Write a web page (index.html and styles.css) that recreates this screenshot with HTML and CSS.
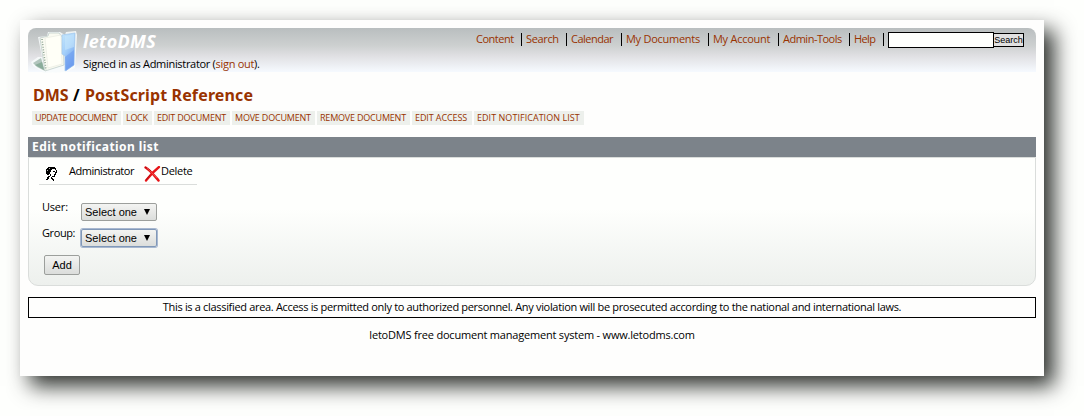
FILE: index.html
```html
<!DOCTYPE html>
<html lang="en">
<head>
<meta charset="utf-8">
<title>letoDMS: Edit notification list</title>
<link rel="stylesheet" href="styles.css">
</head>
<body>
<div class="page">
  <header class="header">
    <svg class="logo" width="48" height="43" viewBox="0 0 48 43">
      <path d="M0 32 7 27 11 27 7 7 16 6 17 2 29 2 34 5 35 2 45 1 46 5 44 38 35 42 13 43 2 36Z" fill="#f8fcfc" opacity=".85"/>
      <path d="M2 33 10 28 14 41 6 37Z" fill="#b2c5bd"/>
      <path d="M4 35 11 32 13 40Z" fill="#8aac9a"/>
      <path d="M9 8 17 6 18 3 28 3 32 8 33 35 14 41Z" fill="#fafbf2" stroke="#c2cfcc" stroke-width=".8"/>
      <path d="M14 8 30 5 31 34 17 38Z" fill="#fffff7" stroke="#e0e4da" stroke-width=".5"/>
      <path d="M11 9 15 40" stroke="#8ca292" stroke-width="1.5" stroke-dasharray="1 1.6"/>
      <path d="M31 5 44 3 43 35 34 41 34 26 31 24Z" fill="url(#folder)" stroke="#a3c9ec" stroke-width=".7"/>
      <path d="M34 27 43 20 43 35 35 41Z" fill="#6d9df0" opacity=".6"/>
      <path d="M34 6V20L43 17V4" fill="#cbe9fb" opacity=".5"/>
      <defs><linearGradient id="folder" x1="0" y1="0" x2=".5" y2="1"><stop stop-color="#c3e5fb"/><stop offset=".5" stop-color="#a3cffa"/><stop offset="1" stop-color="#6b9aea"/></linearGradient></defs>
    </svg>
    <div class="brand">
      <div class="title">letoDMS</div>
      <div class="signed">Signed in as Administrator (<a>sign out</a>).</div>
    </div>
    <nav class="nav">
      <a class="n1">Content</a><a class="n2">Search</a><a class="n3">Calendar</a><a class="n4">My Documents</a><a class="n5">My Account</a><a class="n6">Admin-Tools</a><a class="n7">Help</a>
      <form class="search"><input class="query" type="text" aria-label="Search"><button class="go" type="button">Search</button></form>
    </nav>
  </header>
  <h1 class="path"><a class="p1">DMS</a><span class="slash">/</span><a class="p2">PostScript Reference</a></h1>
  <div class="actions">
    <a class="a1">UPDATE DOCUMENT</a><a class="a2">LOCK</a><a class="a3">EDIT DOCUMENT</a><a class="a4">MOVE DOCUMENT</a><a class="a5">REMOVE DOCUMENT</a><a class="a6">EDIT ACCESS</a><a class="a7">EDIT NOTIFICATION LIST</a>
  </div>
  <h2 class="heading"><span>Edit notification list</span></h2>
  <section class="panel">
    <div class="entry">
      <svg class="person" width="14" height="17" viewBox="0 0 14 17">
        <path d="M4 2H11V3H12V5H11V4H8V5H7V7H6V9H5V10H3V9H2V4H3V3H4Z"/>
        <path d="M12 5h1v3h-1v2h-1v2h-3v-1h2v-2h1v-2h1zM9 6h2v1H9zM6 9h1v2H6zM4 11h2v1H5v2H4v1H2v-1h1v-2h1zM7 12h1v1h1v1h1v2H9v-1H8v-1H7z"/>
        <path d="M3 5h1v1H3zM5 3h1v1H5z" fill="#bbb"/>
      </svg>
      <span class="name">Administrator</span>
      <svg class="cross" width="17" height="16" viewBox="0 0 17 16">
        <path d="M1.5 1.5C6 4 9 8 14.500 14.500" fill="none" stroke="#e71518" stroke-width="2.500" stroke-linecap="round"/>
        <path d="M15 1C10 5 7 8 2 14.500" fill="none" stroke="#e71518" stroke-width="2.300" stroke-linecap="round"/>
        <path d="M1 1 7 5M2 14 6 9" stroke="#b60d12"/><path d="M3 2 13 12" stroke="#ff7770" stroke-width=".5"/>
      </svg>
      <span class="delete">Delete</span>
    </div>
    <div class="row"><label class="l1">User:</label><div class="select"><span>Select one</span><i></i></div></div>
    <div class="row"><label class="l2">Group:</label><div class="select focused"><span>Select one</span><i></i></div></div>
    <button class="add" type="button">Add</button>
  </section>
  <div class="notice"><span>This is a classified area. Access is permitted only to authorized personnel. Any violation will be prosecuted according to the national and international laws.</span></div>
  <footer class="footer"><span>letoDMS free document management system - www.letodms.com</span></footer>
</div>
</body>
</html>
```
FILE: styles.css
```css
* { box-sizing: border-box; }
body { margin: 0; padding: 20px; height: 416px; overflow: hidden; background: #fefffd; color: #000; font: 11px/16px "Open Sans", "Noto Sans", sans-serif; }
a { color: #993300; }
.page { width: 1024px; height: 356px; padding: 8px; background: #fefefd; box-shadow: 10px 10px 20px rgba(0,5,0,.82); white-space: nowrap; }
.header { display: flex; height: 44px; padding-left: 3px; border-radius: 8px 8px 0 0; background: linear-gradient(#b9bebf 0, #cdd0d0 40%, #e1e1e4 65%, #f6faff 100%); }
.logo { margin-top: 2px; flex: none; }
.brand { padding: 2px 0 0 4px; }
.title { font-family: "Noto Sans", sans-serif; font-size: 18px; line-height: 22px; font-weight: 700; font-style: italic; letter-spacing: .3px; color: #fff; }
.signed { margin-top: 4px; letter-spacing: -.3px; }
.nav { display: flex; margin-left: auto; padding-right: 12px; height: 24px; }
.nav a { height: 13px; margin: 5px 4px 0 0; line-height: 12px; border-right: 1px solid #000; }
.n1 { width: 46px; letter-spacing: -.5px; }
.n2 { width: 41px; letter-spacing: -.35px; }
.n3 { width: 51px; letter-spacing: -.5px; }
.n4 { width: 83px; letter-spacing: -.27px; }
.n5 { width: 66px; letter-spacing: -.27px; }
.n6 { width: 67px; letter-spacing: -.5px; }
.n7 { width: 30px; letter-spacing: -.6px; }
.search { display: flex; margin-top: 4px; }
.query { width: 106px; height: 16px; padding: 0; border: 1px solid #000; background: #fefffd; }
.go { width: 31px; height: 14px; margin: 1px 0 0 -1px; padding: 0; border: 1px solid #000; background: #e1e1e1; font: 9px/12px "Liberation Sans", sans-serif; color: #000; }
.path { display: flex; margin: 12px 0 0 5px; font-family: "Noto Sans", sans-serif; font-size: 16px; line-height: 22px; font-weight: 700; }
.p1 { width: 40px; } .slash { width: 12px; } .p2 { letter-spacing: .13px; }
.actions { display: flex; gap: 2px; margin: 5px 0 0 4px; }
.actions a { height: 14px; padding-left: 3px; background: #edf0ec; font-size: 9px; line-height: 14px; }
.a1 { width: 89px; letter-spacing: -.33px; }
.a2 { width: 29px; letter-spacing: -.3px; }
.a3 { width: 76px; letter-spacing: -.23px; }
.a4 { width: 83px; letter-spacing: -.2px; }
.a5 { width: 93px; letter-spacing: -.2px; }
.a6 { width: 60px; letter-spacing: -.1px; }
.a7 { width: 110px; letter-spacing: .04px; }
.heading { height: 20px; margin: 12px 0 0; padding-left: 4px; background: #7c838a; color: #fff; font-family: "Noto Sans", sans-serif; font-size: 12px; line-height: 20px; font-weight: 700; letter-spacing: .42px; }
.panel { height: 129px; padding: 5px 0 0 10px; border: 1px solid #dadddb; border-radius: 0 0 10px 10px; background: linear-gradient(#fefffd 40%, #edf0ed); }
.entry { display: flex; width: 158px; height: 22px; padding-left: 5px; border-bottom: 1px solid #dadddb; }
.person { margin-top: 2px; flex: none; }
.name { width: 75px; margin-left: 11px; letter-spacing: -.46px; }
.cross { margin-top: 3px; flex: none; }
.delete { letter-spacing: -.3px; }
.row { display: flex; height: 26px; padding-left: 3px; }
.entry + .row { margin-top: 15px; }
.row label { width: 39px; margin-top: -1px; }
.l1 { letter-spacing: -.2px; } .l2 { letter-spacing: -.4px; }
.select { display: flex; align-items: center; width: 76px; height: 18px; margin-top: 3px; padding: 0 6px 0 3px; border: 1px solid #9c9f9c; border-radius: 2px; background: linear-gradient(#f3f4f2, #dbdddb); font: 11px/16px "Liberation Sans", sans-serif; }
.select i { margin-left: auto; border: 3px solid transparent; border-top: 6px solid #000; border-bottom: 0; }
.focused { border-color: #8098b8; box-shadow: 0 0 0 1px #a8b8d0; }
.add { display: block; width: 36px; height: 20px; margin: 3px 0 0 5px; padding: 0; border: 1px solid #9c9f9c; border-radius: 2px; background: linear-gradient(#f3f4f2, #dbdddb); font: 11px/16px "Liberation Sans", sans-serif; color: #000; }
.notice { height: 21px; margin-top: 11px; border: 1px solid #000; text-align: center; line-height: 18px; letter-spacing: -.325px; }
.footer { margin-top: 9px; text-align: center; line-height: 16px; letter-spacing: -.2px; }
```
